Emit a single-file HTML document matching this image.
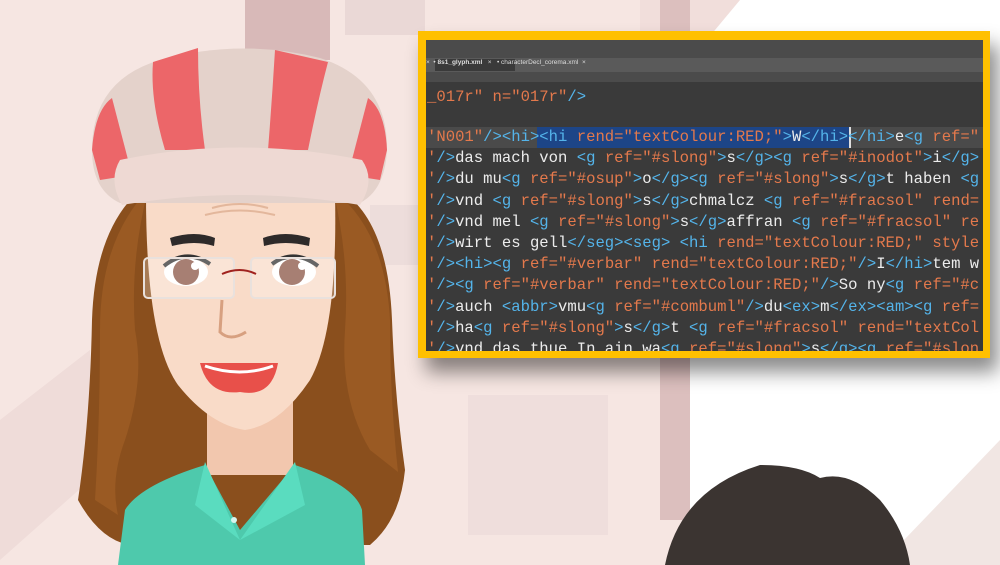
<!DOCTYPE html>
<html><head><meta charset="utf-8"><style>
*{margin:0;padding:0;box-sizing:border-box}
body{width:1000px;height:565px;overflow:hidden;position:relative;background:#f6e6e2;font-family:"Liberation Sans",sans-serif}
.abs{position:absolute}
.panel{left:418px;top:31px;width:572px;height:327px;background:#ffc000;box-shadow:8px 14px 18px rgba(0,0,0,.45)}
.inner{position:absolute;left:8px;top:9px;width:557px;height:311px;background:#3a3a3a;overflow:hidden}
.code{position:absolute;left:1px;font-family:"Liberation Mono",monospace;font-size:15.6px;color:#ececec;white-space:pre;line-height:21.2px}
.t{color:#54b4ea}.a{color:#e4794c}
</style></head><body>
<svg class="abs" style="left:0;top:0" width="1000" height="565">
<rect x="0" y="0" width="1000" height="565" fill="#f6e6e2"/>
<polygon points="690,0 1000,0 1000,565 690,565" fill="#ffffff"/>
<polygon points="640,0 740,0 690,60 640,60" fill="#f1dedb"/>
<polygon points="880,565 1000,440 1000,565" fill="#f1e6e3"/>
<rect x="245" y="0" width="85" height="60" fill="#d8b9b8"/>
<rect x="345" y="0" width="80" height="35" fill="#ead8d6"/>
<rect x="660" y="0" width="30" height="520" fill="#dcbfbe"/>
<rect x="370" y="205" width="50" height="60" fill="#eddddb"/>
<rect x="468" y="395" width="140" height="140" fill="#efdedc"/>
<polygon points="0,420 90,350 90,480 0,560" fill="#efdcd9"/>
<!-- hair back -->
<path d="M140 190 Q95 230 92 320 Q90 420 78 500 Q100 540 130 545 L370 545 Q400 520 405 470 Q395 400 392 320 Q388 220 340 190 Z" fill="#8a4f1d"/>
<rect x="207" y="400" width="86" height="75" fill="#f2c7ae"/>
<path d="M118 565 L125 510 Q140 485 205 465 L240 530 L295 465 Q355 485 362 510 L365 565 Z" fill="#4ec9ac"/>
<path d="M205 462 L195 505 L240 540 Z" fill="#5adcbf"/><path d="M295 462 L305 505 L240 540 Z" fill="#5adcbf"/>
<circle cx="234" cy="520" r="3" fill="#d7f5ee"/>
<path d="M146 195 L335 195 Q338 330 310 380 Q280 425 245 430 Q210 425 178 385 Q146 340 146 195 Z" fill="#f9dbc8"/>
<path d="M148 190 Q130 260 135 330 Q145 380 125 440 Q110 480 118 515 L95 500 Q100 420 100 330 Q100 240 148 190 Z" fill="#9a5a23"/>
<path d="M333 190 Q350 260 345 330 Q340 400 370 450 L398 472 Q390 400 390 320 Q385 230 333 190 Z" fill="#9a5a23"/>
<path d="M212 208 Q240 200 268 208" stroke="#e3b79c" stroke-width="2" fill="none"/>
<path d="M205 215 Q240 206 275 215" stroke="#e3b79c" stroke-width="2" fill="none"/>
<path d="M170 238 Q195 230 215 238 L214 246 Q195 240 172 246 Z" fill="#2e2a2a"/>
<path d="M263 238 Q285 230 310 238 L309 246 Q285 240 264 246 Z" fill="#2e2a2a"/>
<ellipse cx="186" cy="272" rx="22" ry="14" fill="#fff"/><circle cx="186" cy="272" r="13" fill="#8a5444"/><circle cx="195" cy="266" r="4" fill="#fff"/>
<ellipse cx="294" cy="272" rx="22" ry="14" fill="#fff"/><circle cx="292" cy="272" r="13" fill="#8a5444"/><circle cx="302" cy="266" r="4" fill="#fff"/>
<path d="M164 266 Q186 248 210 264" stroke="#333" stroke-width="4" fill="none"/>
<path d="M272 264 Q294 248 318 266" stroke="#333" stroke-width="4" fill="none"/>
<rect x="144" y="258" width="90" height="40" rx="4" fill="rgba(255,255,255,.25)" stroke="#e9e1dd" stroke-width="2"/>
<rect x="251" y="258" width="84" height="40" rx="4" fill="rgba(255,255,255,.25)" stroke="#e9e1dd" stroke-width="2"/>
<path d="M222 274 Q240 266 256 274" stroke="#a0221e" stroke-width="2" fill="none"/>
<path d="M222 300 L220 332 Q230 342 246 332" stroke="#d7a080" stroke-width="3" fill="none"/>
<path d="M200 363 L278 363 Q272 398 240 392 Q208 396 200 363 Z" fill="#e8504a"/>
<path d="M205 366 Q240 378 273 366" stroke="#fff" stroke-width="3" fill="none"/>
<!-- hat -->
<path d="M92 150 Q92 80 160 60 Q240 38 320 58 Q388 80 387 150 Q385 190 360 203 L120 203 Q92 190 92 150 Z" fill="#e4d2cb"/>
<path d="M153 62 Q150 100 165 150 L205 150 Q198 100 198 48 Z" fill="#ec6669"/>
<path d="M275 50 Q272 100 268 150 L308 150 Q318 100 328 62 Z" fill="#ec6669"/>
<path d="M92 150 Q95 110 112 98 L132 175 L100 180 Z" fill="#ec6669"/>
<path d="M387 150 Q385 110 368 98 L348 175 L380 180 Z" fill="#ec6669"/>
<path d="M120 160 Q240 135 362 160 Q376 180 360 205 Q240 185 122 205 Q108 180 120 160 Z" fill="#eed9d3"/>
<path d="M665 565 Q680 490 760 465 Q800 465 820 478 Q850 470 880 500 Q905 530 910 565 Z" fill="#3b3431"/>
</svg>
<div class="abs panel"><div class="inner">
<div class="abs" style="left:0;top:0;width:557px;height:18px;background:#4b4b4b"></div>
<div class="abs" style="left:0;top:18px;width:557px;height:14px;background:#5a5a5a"></div>
<div class="abs" style="left:9px;top:19px;width:80px;height:12px;background:#3a3a3a"></div>
<div class="abs" style="left:0;top:19px;font-size:6.5px;color:#ddd;white-space:pre">×  • <b>8s1_glyph.xml</b>   ×   • characterDecl_corema.xml  ×</div>
<div class="abs" style="left:0;top:32px;width:557px;height:10px;background:#4b4b4b"></div>
<div class="abs" style="left:0;top:87px;width:557px;height:21px;background:#4a4a4a"></div>
<div class="abs" style="left:111px;top:87px;width:312px;height:21px;background:#1d4587"></div>
<div class="abs" style="left:423px;top:87px;width:2px;height:21px;background:#ddd"></div>
<div class="code" style="top:47px"><span class="a">_017r" n="017r"</span><span class="t">/></span></div>
<div class="code" style="top:87px"><span class="a">'N001"</span><span class="t">/>&lt;hi>&lt;hi </span><span class="a">rend="textColour:RED;"</span><span class="t">></span>W<span class="t">&lt;/hi>&lt;/hi></span>e<span class="t">&lt;g </span><span class="a">ref="</span>
<span class="a">'</span><span class="t">/></span>das mach von <span class="t">&lt;g </span><span class="a">ref="#slong"</span><span class="t">></span>s<span class="t">&lt;/g>&lt;g </span><span class="a">ref="#inodot"</span><span class="t">></span>i<span class="t">&lt;/g></span>
<span class="a">'</span><span class="t">/></span>du mu<span class="t">&lt;g </span><span class="a">ref="#osup"</span><span class="t">></span>o<span class="t">&lt;/g>&lt;g </span><span class="a">ref="#slong"</span><span class="t">></span>s<span class="t">&lt;/g></span>t haben <span class="t">&lt;g</span>
<span class="a">'</span><span class="t">/></span>vnd <span class="t">&lt;g </span><span class="a">ref="#slong"</span><span class="t">></span>s<span class="t">&lt;/g></span>chmalcz <span class="t">&lt;g </span><span class="a">ref="#fracsol" rend=</span>
<span class="a">'</span><span class="t">/></span>vnd mel <span class="t">&lt;g </span><span class="a">ref="#slong"</span><span class="t">></span>s<span class="t">&lt;/g></span>affran <span class="t">&lt;g </span><span class="a">ref="#fracsol" re</span>
<span class="a">'</span><span class="t">/></span>wirt es gell<span class="t">&lt;/seg>&lt;seg> &lt;hi </span><span class="a">rend="textColour:RED;" style</span>
<span class="a">'</span><span class="t">/>&lt;hi>&lt;g </span><span class="a">ref="#verbar" rend="textColour:RED;"</span><span class="t">/></span>I<span class="t">&lt;/hi></span>tem w
<span class="a">'</span><span class="t">/>&lt;g </span><span class="a">ref="#verbar" rend="textColour:RED;"</span><span class="t">/></span>So ny<span class="t">&lt;g </span><span class="a">ref="#c</span>
<span class="a">'</span><span class="t">/></span>auch <span class="t">&lt;abbr></span>vmu<span class="t">&lt;g </span><span class="a">ref="#combuml"</span><span class="t">/></span>du<span class="t">&lt;ex></span>m<span class="t">&lt;/ex>&lt;am>&lt;g </span><span class="a">ref=</span>
<span class="a">'</span><span class="t">/></span>ha<span class="t">&lt;g </span><span class="a">ref="#slong"</span><span class="t">></span>s<span class="t">&lt;/g></span>t <span class="t">&lt;g </span><span class="a">ref="#fracsol" rend="textCol</span>
<span class="a">'</span><span class="t">/></span>vnd das thue In ain wa<span class="t">&lt;g </span><span class="a">ref="#slong"</span><span class="t">></span>s<span class="t">&lt;/g>&lt;g </span><span class="a">ref="#slon</span></div>
</div></div>
</body></html>
